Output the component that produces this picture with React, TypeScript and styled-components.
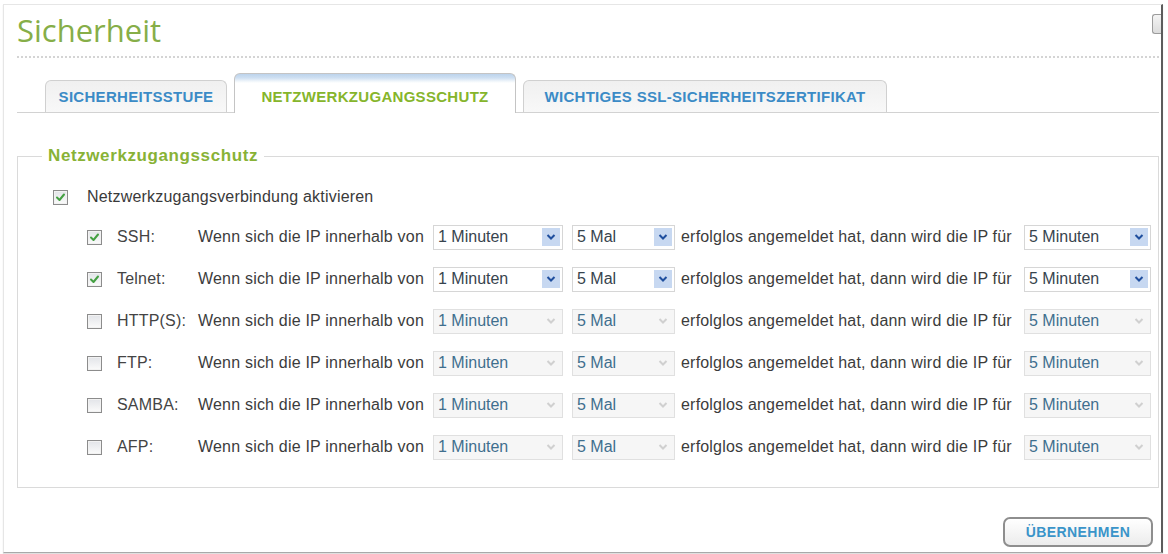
import React from "react";
import styled, { createGlobalStyle } from "styled-components";

const GlobalStyle = createGlobalStyle`
  html, body { margin: 0; padding: 0; background: #ffffff; }
  body {
    font-family: "Liberation Sans", Arial, sans-serif;
    width: 1168px;
    height: 554px;
    overflow: hidden;
  }
`;

const Frame = styled.div`
  position: relative;
  box-sizing: border-box;
  margin: 4px 0 0 3px;
  width: 1160px;
  height: 549px;
  border: 1px solid #e6e6e6;
  border-right: 2px solid #5c5c5c;
  border-bottom: 1px solid #a9a9a9;
  box-shadow: 0 1px 1px rgba(0, 0, 0, 0.12);
  padding: 0 2px 0 13px;
  display: flex;
  flex-direction: column;
`;

const ScrollThumb = styled.div`
  position: absolute;
  top: 9px;
  right: 0;
  width: 8px;
  height: 18px;
  border: 1px solid #9c9c9c;
  border-right: none;
  border-radius: 3px 0 0 3px;
  background: linear-gradient(#f4f4f4, #dcdcdc);
`;

const Title = styled.h1`
  margin: 7px 0 0 0;
  font-family: "Open Sans", "DejaVu Sans", sans-serif;
  font-weight: 400;
  font-size: 31px;
  line-height: 36px;
  color: #86ae48;
`;

const DottedRule = styled.div`
  margin-top: 8px;
  height: 2px;
  background: linear-gradient(to right, #d4d4d4 50%, transparent 50%) 0 0 / 4px 2px repeat-x;
`;

const TabBar = styled.div`
  margin-top: 15px;
  display: flex;
  align-items: flex-end;
  gap: 7px;
  padding-left: 28px;
  border-bottom: 1px solid #d2d2d2;
`;

const Tab = styled.div<{ $active?: boolean; $w: number }>`
  box-sizing: border-box;
  width: ${(p) => p.$w}px;
  height: ${(p) => (p.$active ? 40 : 32)}px;
  margin-bottom: ${(p) => (p.$active ? -1 : 0)}px;
  padding-top: ${(p) => (p.$active ? 6 : 0)}px;
  display: flex;
  align-items: center;
  justify-content: center;
  border: 1px solid ${(p) => (p.$active ? "#c4c4c4" : "#d0d0d0")};
  border-bottom: none;
  border-radius: 6px 6px 0 0;
  background: ${(p) =>
    p.$active
      ? "linear-gradient(#bcd3ec 0px, #cfe0f2 4px, #eef4fa 7px, #ffffff 9px)"
      : "linear-gradient(#f0f0f0, #f8f8f8)"};
  font-weight: 700;
  font-size: 15px;
  letter-spacing: 0.3px;
  color: ${(p) => (p.$active ? "#86b52c" : "#3b8bc6")};
  white-space: nowrap;
`;

const Fieldset = styled.fieldset`
  margin: 34px 0 0 0;
  padding: 15px 0 19px 0;
  border: 1px solid #dadada;
  min-width: 0;
`;

const Legend = styled.legend`
  margin-left: 24px;
  padding: 0 6px;
  font-weight: 700;
  font-size: 17px;
  line-height: 18px;
  letter-spacing: 0.6px;
  color: #88b236;
`;

const FieldBody = styled.div`
  padding-left: 35px;
`;

const MainRow = styled.div`
  height: 34px;
  display: flex;
  align-items: center;
  gap: 19px;
  font-size: 16px;
  letter-spacing: 0.2px;
  color: #3a3a3a;
`;

const Rows = styled.div`
  margin: 2px 0 0 34px;
`;

const Row = styled.div`
  height: 42px;
  display: grid;
  grid-template-columns: 30px 81px 235px 139px 109px 343px 127px;
  align-items: center;
  font-size: 16px;
  letter-spacing: 0.2px;
  color: #3c3c3c;
  white-space: nowrap;
`;

const Label = styled.span`
  color: #444;
`;

const Box = styled.span`
  box-sizing: border-box;
  width: 15px;
  height: 15px;
  display: inline-flex;
  align-items: center;
  justify-content: center;
  border: 1px solid #8c8c8c;
  background: linear-gradient(#e2e4e8, #fbfbfb);
  box-shadow: inset 0 0 0 1px #f2f2f2;
`;

const SelectBox = styled.div<{ $w: number; $disabled?: boolean }>`
  box-sizing: border-box;
  width: ${(p) => p.$w}px;
  height: 25px;
  display: flex;
  align-items: center;
  justify-content: space-between;
  padding: 0 2px 0 4px;
  border: 1px solid ${(p) => (p.$disabled ? "#e0e0e0" : "#d6d6d6")};
  background: ${(p) => (p.$disabled ? "#f6f6f6" : "#ffffff")};
  color: ${(p) => (p.$disabled ? "#3f6f8e" : "#37444e")};
  font-size: 16px;
  letter-spacing: 0;
`;

const ArrowBox = styled.span<{ $disabled?: boolean }>`
  width: 18px;
  height: 18px;
  display: flex;
  align-items: center;
  justify-content: center;
  background: ${(p) => (p.$disabled ? "transparent" : "#c7d8f1")};
  color: ${(p) => (p.$disabled ? "#d0d0d0" : "#1f4f9e")};
`;

const Footer = styled.div`
  margin-top: 29px;
  display: flex;
  justify-content: flex-end;
  padding-right: 6px;
`;

const Button = styled.button`
  box-sizing: border-box;
  width: 150px;
  height: 30px;
  border: 2px solid #8e8e8e;
  border-radius: 7px;
  background: linear-gradient(#ffffff, #ececec);
  font-family: "Liberation Sans", Arial, sans-serif;
  font-weight: 700;
  font-size: 14px;
  letter-spacing: 0.4px;
  color: #3a94c9;
  padding: 0;
`;

const Check = () => (
  <svg width="11" height="11" viewBox="0 0 11 11">
    <path d="M2 5.5 L4.5 8 L9 2.5" fill="none" stroke="#45a043" strokeWidth="2" strokeLinecap="round" strokeLinejoin="round" />
  </svg>
);

const CheckBox = ({ checked }: { checked?: boolean }) => <Box>{checked ? <Check /> : null}</Box>;

const Chevron = () => (
  <svg width="10" height="8" viewBox="0 0 10 8">
    <path d="M1.5 2 L5 5.5 L8.5 2" fill="none" stroke="currentColor" strokeWidth="2" />
  </svg>
);

const Select = ({ value, width, disabled }: { value: string; width: number; disabled?: boolean }) => (
  <SelectBox $w={width} $disabled={disabled}>
    <span>{value}</span>
    <ArrowBox $disabled={disabled}>
      <Chevron />
    </ArrowBox>
  </SelectBox>
);

const rows = [
  { label: "SSH:", checked: true },
  { label: "Telnet:", checked: true },
  { label: "HTTP(S):", checked: false },
  { label: "FTP:", checked: false },
  { label: "SAMBA:", checked: false },
  { label: "AFP:", checked: false },
];

export default function App() {
  return (
    <>
      <GlobalStyle />
      <Frame>
        <ScrollThumb />
        <Title>Sicherheit</Title>
        <DottedRule />
        <TabBar>
          <Tab $w={182}>SICHERHEITSSTUFE</Tab>
          <Tab $w={282} $active>
            NETZWERKZUGANGSSCHUTZ
          </Tab>
          <Tab $w={364}>WICHTIGES SSL-SICHERHEITSZERTIFIKAT</Tab>
        </TabBar>
        <Fieldset>
          <Legend>Netzwerkzugangsschutz</Legend>
          <FieldBody>
            <MainRow>
              <CheckBox checked />
              <span>Netzwerkzugangsverbindung aktivieren</span>
            </MainRow>
            <Rows>
              {rows.map((r) => (
                <Row key={r.label}>
                  <CheckBox checked={r.checked} />
                  <Label>{r.label}</Label>
                  <span>Wenn sich die IP innerhalb von</span>
                  <Select value="1 Minuten" width={130} disabled={!r.checked} />
                  <Select value="5 Mal" width={103} disabled={!r.checked} />
                  <span>erfolglos angemeldet hat, dann wird die IP für</span>
                  <Select value="5 Minuten" width={127} disabled={!r.checked} />
                </Row>
              ))}
            </Rows>
          </FieldBody>
        </Fieldset>
        <Footer>
          <Button>ÜBERNEHMEN</Button>
        </Footer>
      </Frame>
    </>
  );
}
